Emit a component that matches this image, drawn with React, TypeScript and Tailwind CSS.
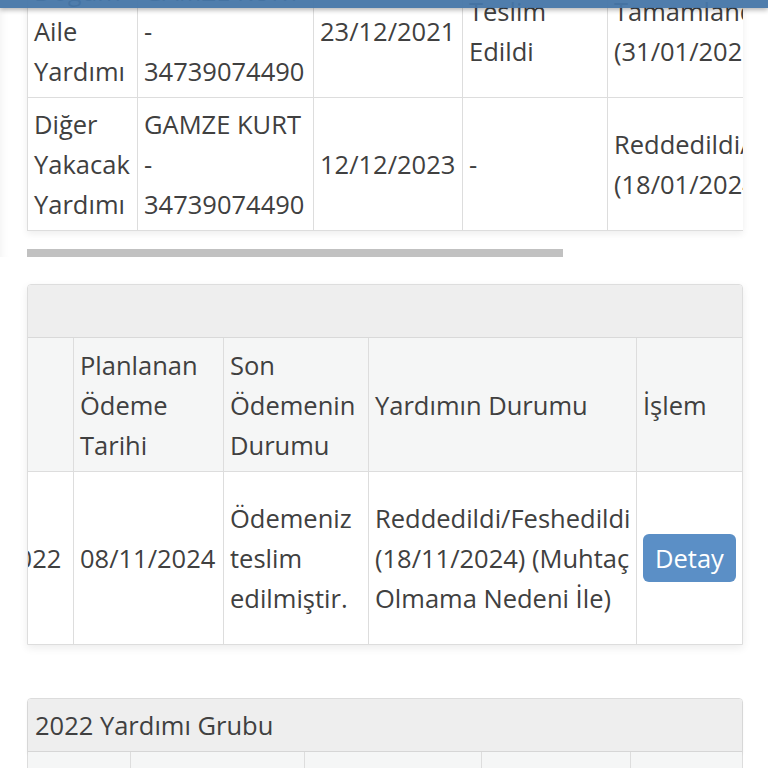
import React from "react";

function Cell({
  w,
  lines,
  last = false,
  children,
}: {
  w: string;
  lines?: React.ReactNode[];
  last?: boolean;
  children?: React.ReactNode;
}) {
  return (
    <div
      className={`${w} shrink-0 flex flex-col justify-center px-[6px] ${
        last ? "" : "border-r border-[#dddddd]"
      }`}
    >
      {lines
        ? lines.map((l, i) => (
            <div key={i} className="whitespace-nowrap">
              {l}
            </div>
          ))
        : children}
    </div>
  );
}

export default function App() {
  return (
    <div className="relative w-[768px] h-[768px] overflow-hidden bg-white font-['Open_Sans',sans-serif] text-[25.5px] leading-[40px] text-[#404040]">
      {/* fixed top navbar */}
      <div className="fixed top-0 left-0 right-0 h-[8px] bg-[#4676a8]/95 shadow-[0_2px_5px_rgba(0,0,0,0.3)] z-10" />

      {/* section 1: scrolled table */}
      <div className="-mt-[35px] pl-[27px] shadow-[inset_10px_0_8px_-8px_rgba(0,0,0,0.05)]">
        <div className="w-[716px] overflow-hidden shadow-[0_3px_7px_rgba(0,0,0,0.07)]">
          <div className="w-max border-l border-[#dddddd] flex flex-col">
            <div className="flex h-[133px] border-b border-[#dddddd]">
              <Cell w="w-[110px]" lines={["Doğum", "Aile", "Yardımı"]} />
              <Cell w="w-[176px]" lines={["GAMZE KURT", "-", "34739074490"]} />
              <Cell w="w-[149px]" lines={["23/12/2021"]} />
              <Cell w="w-[145px]" lines={["Teslim", "Edildi"]} />
              <Cell w="w-[270px]" lines={["Tamamlandı", "(31/01/2022)"]} />
              <Cell w="w-[110px]" lines={["Detay"]} last />
            </div>
            <div className="flex h-[133px] border-b border-[#dddddd]">
              <Cell w="w-[110px]" lines={["Diğer", "Yakacak", "Yardımı"]} />
              <Cell w="w-[176px]" lines={["GAMZE KURT", "-", "34739074490"]} />
              <Cell w="w-[149px]" lines={["12/12/2023"]} />
              <Cell w="w-[145px]" lines={["-"]} />
              <Cell w="w-[270px]" lines={["Reddedildi/Feshedildi", "(18/01/2024)"]} />
              <Cell w="w-[110px]" lines={["Detay"]} last />
            </div>
          </div>
        </div>
        {/* scrollbar thumb */}
        <div className="mt-[18px] h-[8px] w-[536px] bg-[#c1c1c1]" />
      </div>

      {/* panel 2 */}
      <div className="ml-[27px] mt-[27px] w-[716px] border border-[#dddddd] rounded-t-[4px] shadow-[0_3px_8px_rgba(0,0,0,0.08)]">
        <div className="h-[53px] bg-[#eeeeee] border-b border-[#d9d9d9] rounded-t-[3px]" />
        <div className="flex justify-end overflow-hidden">
          <div className="shrink-0 flex flex-col">
            <div className="flex h-[134px] bg-[#f5f6f6] border-b border-[#dddddd]">
              <Cell w="w-[154px]" lines={["Başvuru", "Tarihi"]} />
              <Cell w="w-[150px]" lines={["Planlanan", "Ödeme", "Tarihi"]} />
              <Cell w="w-[145px]" lines={["Son", "Ödemenin", "Durumu"]} />
              <Cell w="w-[268px]" lines={["Yardımın Durumu"]} />
              <Cell w="w-[105px]" lines={["İşlem"]} last />
            </div>
            <div className="flex h-[172px] bg-white">
              <Cell w="w-[154px]" lines={["08/11/2022"]} />
              <Cell w="w-[150px]" lines={["08/11/2024"]} />
              <Cell w="w-[145px]" lines={["Ödemeniz", "teslim", "edilmiştir."]} />
              <Cell
                w="w-[268px]"
                lines={["Reddedildi/Feshedildi", "(18/11/2024) (Muhtaç", "Olmama Nedeni İle)"]}
              />
              <Cell w="w-[105px]" last>
                <button className="self-start h-[48px] px-[12px] rounded-[6px] bg-[#5b8fc6] text-white leading-[48px]">
                  Detay
                </button>
              </Cell>
            </div>
          </div>
        </div>
      </div>

      {/* panel 3 */}
      <div className="ml-[27px] mt-[53px] w-[716px] border border-[#dddddd] rounded-t-[4px]">
        <div className="h-[53px] bg-[#eeeeee] border-b border-[#d6d6d6] rounded-t-[3px] flex items-center px-[7px] shadow-[0_2px_4px_rgba(0,0,0,0.06)]">
          2022 Yardımı Grubu
        </div>
        <div className="flex h-[134px] bg-[#f5f6f6]">
          <Cell w="w-[103px]" lines={[]} />
          <Cell w="w-[174px]" lines={[]} />
          <Cell w="w-[177px]" lines={[]} />
          <Cell w="w-[149px]" lines={[]} />
          <Cell w="w-[111px]" lines={[]} last />
        </div>
      </div>
    </div>
  );
}
